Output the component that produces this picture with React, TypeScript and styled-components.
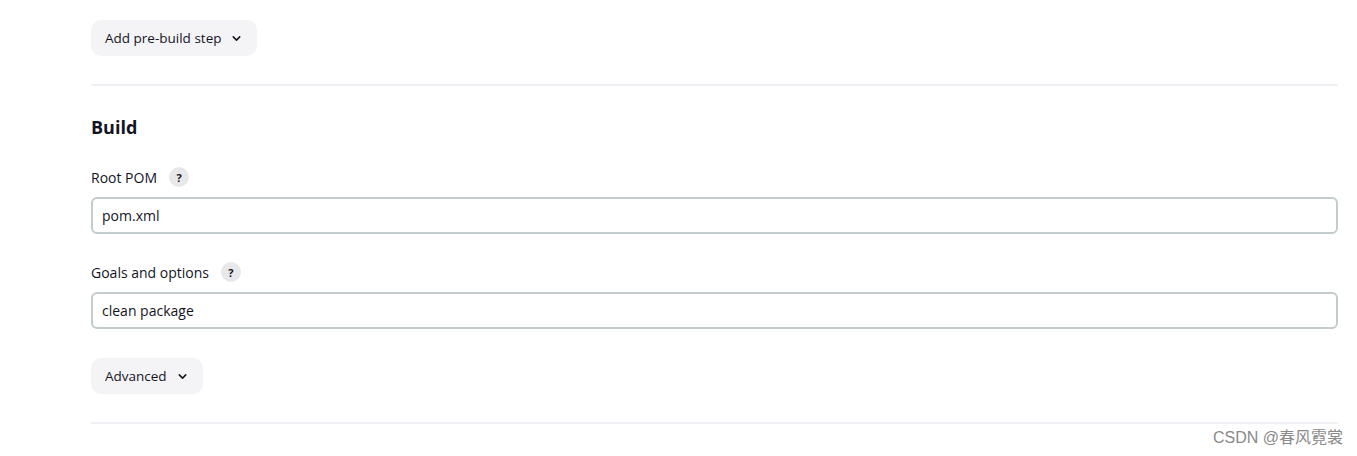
import React from "react";
import styled, { createGlobalStyle } from "styled-components";

const Global = createGlobalStyle`
  html, body { margin: 0; padding: 0; background: #fff; }
  body { font-family: "Open Sans", "Noto Sans", "Liberation Sans", sans-serif; color: #14141f; }
`;

const Page = styled.div`
  width: 1357px;
  height: 456px;
  box-sizing: border-box;
  padding: 20px 19px 0 91px;
  position: relative;
  overflow: hidden;
`;

const DropButton = styled.button`
  display: inline-flex;
  align-items: center;
  gap: 9px;
  height: 36px;
  padding: 0 14px;
  border: none;
  border-radius: 10px;
  background: #f4f4f7;
  font-family: inherit;
  font-size: 13.5px;
  color: #14141f;
  cursor: pointer;
`;

const Divider = styled.hr<{ $top: number }>`
  border: none;
  height: 2px;
  background: #f0f0f4;
  margin: ${(p) => p.$top}px 0 0;
`;

const Heading = styled.h2`
  margin: 21px 0 0;
  font-size: 18px;
  font-weight: 700;
  line-height: 40px;
`;

const Field = styled.div<{ $top: number }>`
  margin-top: ${(p) => p.$top}px;
  display: flex;
  flex-direction: column;
`;

const Label = styled.div`
  display: flex;
  align-items: center;
  gap: 12px;
  height: 24px;
  font-size: 14px;
  margin-bottom: 8px;
`;

const Help = styled.span`
  width: 20px;
  height: 20px;
  border-radius: 50%;
  background: #e8e8ea;
  font-size: 11px;
  font-weight: 700;
  display: inline-flex;
  align-items: center;
  justify-content: center;
`;

const Input = styled.div`
  box-sizing: border-box;
  height: 37px;
  border: 2px solid #c3cbcd;
  border-radius: 6px;
  padding: 0 9px;
  display: flex;
  align-items: center;
  font-size: 14px;
`;

const Watermark = styled.div`
  position: absolute;
  right: 14px;
  bottom: 8px;
  font-size: 16px;
  color: #8a8a8a;
  font-family: "Liberation Sans", "Noto Sans CJK SC", sans-serif;
`;

const Chevron = () => (
  <svg width="13" height="13" viewBox="0 0 24 24" fill="none" stroke="#14141f" strokeWidth="2.8" strokeLinecap="round" strokeLinejoin="round">
    <path d="M6 9l6 6 6-6" />
  </svg>
);

export default function App() {
  return (
    <>
      <Global />
      <Page>
        <DropButton>Add pre-build step <Chevron /></DropButton>
        <Divider $top={28} />
        <Heading>Build</Heading>
        <Field $top={18}>
          <Label>Root POM <Help>?</Help></Label>
          <Input>pom.xml</Input>
        </Field>
        <Field $top={26}>
          <Label>Goals and options <Help>?</Help></Label>
          <Input>clean package</Input>
        </Field>
        <Field $top={29}>
          <div><DropButton>Advanced <Chevron /></DropButton></div>
        </Field>
        <Divider $top={28} />
        <Watermark>CSDN @春风霓裳</Watermark>
      </Page>
    </>
  );
}
